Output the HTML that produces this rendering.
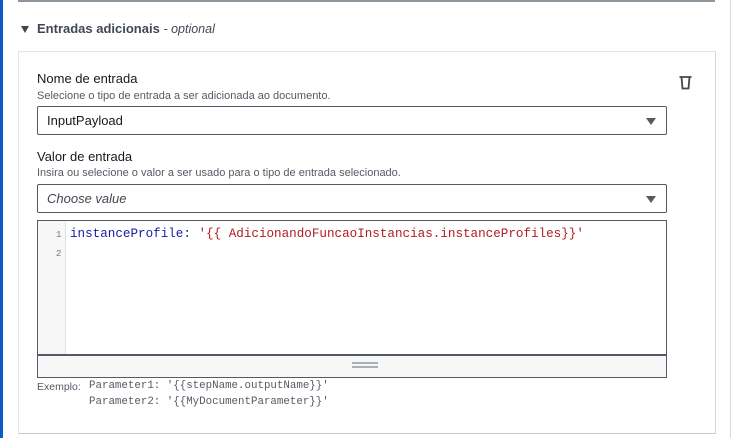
<!DOCTYPE html>
<html><head><meta charset="utf-8"><style>
*{box-sizing:border-box;margin:0;padding:0}
body{width:732px;height:438px;background:#fff;position:relative;overflow:hidden;font-family:"Liberation Sans",sans-serif;color:#16191f}
.abs{position:absolute}
.sel{position:absolute;left:37px;width:630px;height:29px;border:1px solid #545b64;border-radius:2px;background:#fff;font-size:13px;line-height:27px;padding-left:9px}
.tri{position:absolute;right:10px;top:11px;width:0;height:0;border-left:5px solid transparent;border-right:5px solid transparent;border-top:7px solid #545b64}
.mono{font-family:"Liberation Mono",monospace}
</style></head><body>
<div class="abs" style="left:0;top:0;width:3px;height:438px;background:#0a5bc4"></div>
<div class="abs" style="left:18px;top:0;width:697px;height:2px;background:#8d959e"></div>
<div class="abs" style="left:730px;top:0;width:1px;height:438px;background:#d5dbdb"></div>
<div class="abs" style="left:21px;top:26px;width:0;height:0;border-left:4.5px solid transparent;border-right:4.5px solid transparent;border-top:7px solid #414750"></div>
<div class="abs" style="left:37px;top:21px;font-size:13px;font-weight:bold;color:#414750">Entradas adicionais <span style="font-weight:normal;font-style:italic;font-size:12.5px">- optional</span></div>
<div class="abs" style="left:18px;top:51px;width:698px;height:383px;border:1px solid #e3e5e7;border-bottom-color:#c8ccd0;border-right-color:#d5d8db"></div>
<div class="abs" style="left:37px;top:71px;font-size:13px">Nome de entrada</div>
<div class="abs" style="left:37px;top:90px;font-size:11px;color:#545b64">Selecione o tipo de entrada a ser adicionada ao documento.</div>
<svg class="abs" style="left:679px;top:75px" width="13" height="15" viewBox="0 0 13 15"><path d="M0.5 2h12M2.5 2l1 11.5h6l1-11.5" fill="none" stroke="#414750" stroke-width="1.8"/></svg>
<div class="sel" style="top:106px">InputPayload<div class="tri"></div></div>
<div class="abs" style="left:37px;top:149px;font-size:13px">Valor de entrada</div>
<div class="abs" style="left:37px;top:167px;font-size:11px;color:#545b64">Insira ou selecione o valor a ser usado para o tipo de entrada selecionado.</div>
<div class="sel" style="top:184px;font-style:italic;color:#414750">Choose value<div class="tri"></div></div>
<div class="abs" style="left:37px;top:220px;width:630px;height:158px;border:1px solid #545b64;background:#fff">
 <div class="abs" style="left:0;top:0;width:28px;height:134px;background:#f7f7f7;border-right:1px solid #e3e3e3"></div>
 <div class="abs mono" style="left:18px;top:9px;font-size:9px;color:#777">1</div>
 <div class="abs mono" style="left:18px;top:28px;font-size:9px;color:#777">2</div>
 <div class="abs mono" style="left:32px;top:6px;font-size:12.6px;white-space:pre;color:#1a1aa6">instanceProfile: <span style="color:#b01c24">'{{ AdicionandoFuncaoInstancias.instanceProfiles}}'</span></div>
 <div class="abs" style="left:0;top:133px;width:628px;height:2px;background:#545b64"></div>
 <div class="abs" style="left:0;top:135px;width:628px;height:21px;background:#f7f7f7"></div>
 <div class="abs" style="left:314px;top:141px;width:26px;height:2px;background:#aab0b6"></div>
 <div class="abs" style="left:314px;top:145px;width:26px;height:2px;background:#aab0b6"></div>
</div>
<div class="abs" style="left:37px;top:381px;font-size:10.5px;color:#545b64">Exemplo:</div>
<div class="abs mono" style="left:89px;top:378px;font-size:10.8px;color:#545b64;white-space:pre;line-height:16px">Parameter1: '{{stepName.outputName}}'
Parameter2: '{{MyDocumentParameter}}'</div>
</body></html>
